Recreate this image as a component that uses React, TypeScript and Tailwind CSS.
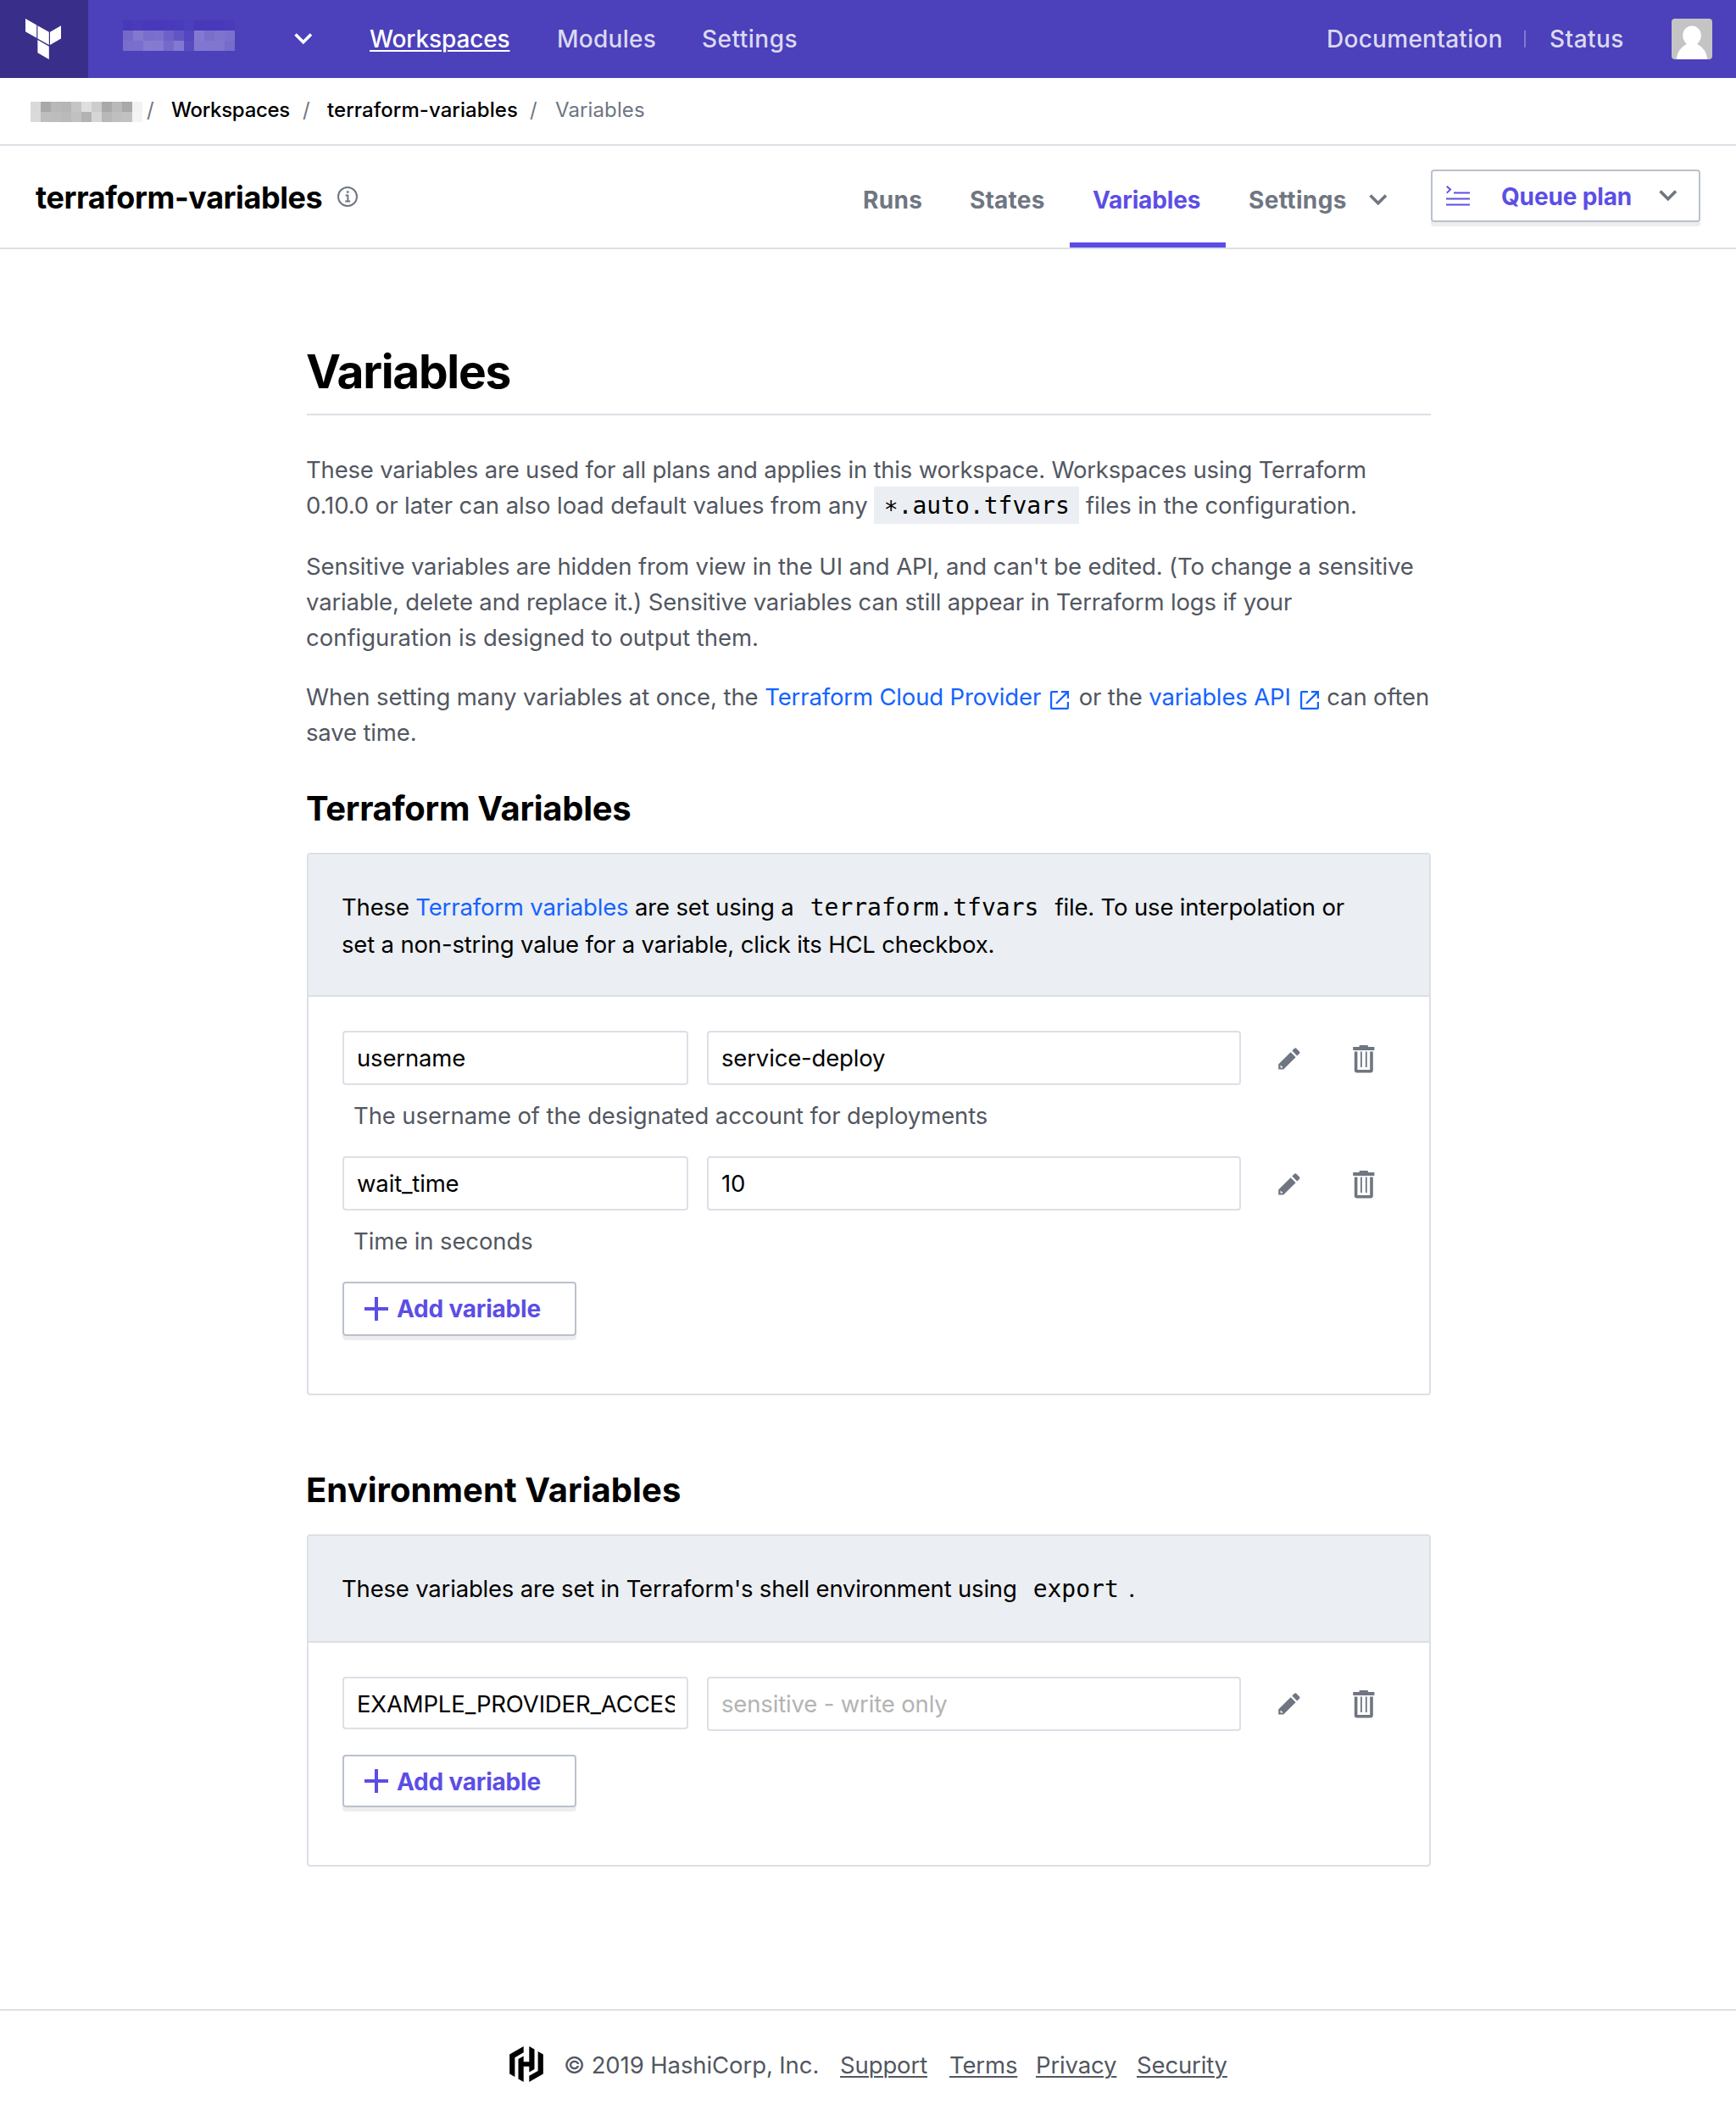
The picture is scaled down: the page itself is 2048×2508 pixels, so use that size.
import type { ReactNode } from "react";
import { SiHashicorp } from "react-icons/si";

function TerraformLogo() {
  return (
    <svg width="44" height="50" viewBox="29 21 44 50" fill="#fff">
      <path d="M30 22l13.2 7.5v15.3L30 37.2z" />
      <path d="M44.4 30.2l13.4 7.6v15.3l-13.4-7.6z" />
      <path d="M59 37.8l13-7.5v15.1L59 53z" />
      <path d="M44.4 47l13.4 7.7v15.2l-13.4-7.6z" />
    </svg>
  );
}

function Chevron({ className = "" }: { className?: string }) {
  return (
    <svg className={className} width="22" height="14" viewBox="0 0 22 14" fill="none" stroke="currentColor" strokeWidth="3.6">
      <path d="M1.6 1.6l9.2 9.2L20 1.6" />
    </svg>
  );
}

function InfoIcon() {
  return (
    <svg width="24" height="24" viewBox="0 0 24 24" fill="none" stroke="#6f7682" strokeWidth="2">
      <circle cx="12" cy="12" r="11" />
      <path d="M9.6 10.4h2.8v7M9.2 17.6h6" />
      <path d="M11 5.2h2.4v2.6H11z" fill="#6f7682" stroke="none" />
    </svg>
  );
}

function QueueIcon() {
  return (
    <svg width="28" height="25" viewBox="0 0 28 25" fill="none" stroke="#5c4ee5" strokeWidth="2">
      <path d="M.8.8l4.2 3.8L.8 8.6" />
      <path d="M9 8.4h19M0 15.4h28M0 22.4h28" />
    </svg>
  );
}

function ExternalIcon() {
  return (
    <svg className="relative top-[5px] inline-block align-baseline" width="22" height="22" viewBox="0 0 22 22" fill="none" stroke="#1563ff" strokeWidth="2.2">
      <path d="M9 1.1H2a.9.9 0 0 0-.9.9v18a.9.9 0 0 0 .9.9h18a.9.9 0 0 0 .9-.9v-7" />
      <path d="M13 1.1h7.900V9M20.6 1.4L7 15" />
    </svg>
  );
}

function PencilIcon() {
  return (
    <svg width="26" height="26" viewBox="0 0 26 26" fill="#6f7682">
      <path d="M16.3 3.6l2.8-2.8a1.6 1.6 0 0 1 2.2 0l3.7 3.7a1.6 1.6 0 0 1 0 2.2l-2.8 2.8z" />
      <path fillRule="evenodd" d="M14.6 5.2l6 6L6.2 25.6H.2v-6zM2.6 20.6v2.8h3.2z" />
    </svg>
  );
}

function TrashIcon() {
  return (
    <svg className="mt-[2px]" width="26" height="33" viewBox="0 0 26 33" fill="#6f7682">
      <path d="M7.5 1.2A1.2 1.2 0 0 1 8.7 0h8.1A1.2 1.2 0 0 1 18 1.2V2h7.4v4H.2V2h7.3z" />
      <path fillRule="evenodd" d="M1.8 7.6h22v22a3 3 0 0 1-3 3h-16a3 3 0 0 1-3-3zM5.4 7.6h14.8v21.4H5.4z" />
      <path d="M9 7.6h1.8V26H9zM14.9 7.6h1.8V26h-1.8z" />
    </svg>
  );
}

function PlusIcon() {
  return (
    <svg width="28" height="28" viewBox="0 0 28 28" stroke="#5c4ee5" strokeWidth="4">
      <path d="M14 0v28M0 14h28" />
    </svg>
  );
}

function Avatar() {
  return (
    <svg className="rounded-[4px]" width="48" height="48" viewBox="0 0 48 48">
      <path fill="#c4c4c4" d="M0 0h48v48H0z" />
      <ellipse cx="24" cy="20" rx="10.8" ry="11.5" fill="#fff" />
      <path fill="#fff" d="M18.500 26h11c0 4 1 4 4.500 6.500 5 4 7.500 8.500 8.200 15.500H5.800c.7-7 3.200-11.500 8.200-15.500 3.500-2.500 4.500-2.500 4.500-6.500z" />
    </svg>
  );
}

const orgTop = ["#7568ca", "#8378d0", "#7a6ecc", "#7b70cd", "#6d61c8", "#6155c3", "#5446be", "#8479d1", "#7a6ecc", "#7f73ce", "#7c70cd"];
const orgBottom = ["#7a6ecc", "#7a6fcc", "#867bd1", "#857ad1", "#7569ca", "#8479d1", "#594cc0", "#8277d0", "#8075cf", "#8075cf", "#776bcb"];
const orgAbove = ["#4739b9", "#493bb9", "#4739b9", "#4739b9", "#483aba", "#493bba", "#4b3fbb", "#4739b9", "#4739b9", "#4739b9", "#493bb9"];
const crumbTop = ["#d9d9d9", "#a8a8a8", "#b8b8b8", "#b6b6b6", "#c5c5c5", "#dfdfdf", "#cccccc", "#a9a9a9", "#b9b9b9", "#a9a9a9", "#f2f2f2"];
const crumbBottom = ["#dadada", "#bebebe", "#bdbdbd", "#bababa", "#c1c1c1", "#b3b3b3", "#d6d6d6", "#b8b8b8", "#bfbfbf", "#c1c1c1", "#f4f4f4"];

function Mosaic({ rows }: { rows: string[][] }) {
  return (
    <div>
      {rows.map((row, r) => (
        <div key={r} className="flex">
          {row.map((color, i) => (
            <div key={i} className="h-3 w-3" style={{ backgroundColor: color }} />
          ))}
        </div>
      ))}
    </div>
  );
}

function Code({ children, shaded = false }: { children: ReactNode; shaded?: boolean }) {
  return (
    <code
      className={
        "px-[11.5px] pt-[6px] pb-[5px] font-['DejaVu_Sans_Mono',monospace] text-[28px] leading-none tracking-normal text-black " +
        (shaded ? "bg-[#ebeef2]" : "")
      }
    >
      {children}
    </code>
  );
}

function Field({ value, muted = false, className }: { value: string; muted?: boolean; className: string }) {
  return (
    <input
      readOnly
      value={muted ? "" : value}
      placeholder={muted ? value : undefined}
      className={"block rounded-[4px] border-2 border-[#dce0e6] bg-white pr-[14px] pl-[15px] tracking-[-0.16px] text-black placeholder:text-[#b3b3b3] " + className}
    />
  );
}

function VariableRow({ name, value, note, muted = false, nameHeight = "h-16" }: { name: string; value: string; note?: string; muted?: boolean; nameHeight?: string }) {
  return (
    <div>
      <div className="flex items-start">
        <Field value={name} className={"w-[408px] " + nameHeight} />
        <Field value={value} muted={muted} className="ml-[22px] h-16 w-[630px]" />
        <div className={"ml-[44px] flex items-center " + (note ? "h-16" : "h-[62px]")}>
          <div className="w-[88px] pt-[2px]">
            <PencilIcon />
          </div>
          <TrashIcon />
        </div>
      </div>
      {note && <p className="mt-[15px] mb-[27px] pl-[13px] leading-[42px] tracking-[-0.11px]">{note}</p>}
    </div>
  );
}

function AddButton({ className, labelClass = "" }: { className: string; labelClass?: string }) {
  return (
    <button className={"flex w-[276px] items-center rounded-[4px] border-2 border-[#bac1cc] pl-[24px] shadow-[0_5px_1px_#ededf0] " + className}>
      <PlusIcon />
      <span className={"ml-[10px] text-[28px] font-bold tracking-[-0.2px] text-[#5c4ee5] " + labelClass}>Add variable</span>
    </button>
  );
}

export default function App() {
  return (
    <div className="flex h-[2508px] w-[2048px] flex-col bg-white font-[Inter,sans-serif] text-[27.5px] text-[#525761]">
      <header className="flex h-[92px] items-center bg-[#4c40bb] text-[28px] font-medium text-[#dbd9f1]">
        <div className="flex h-full w-[104px] items-center bg-[#392f8a] pl-[29px]">
          <TerraformLogo />
        </div>
        <div className="flex w-[332px] items-center pl-[41px]">
          <div className="-mt-2 w-[202px]">
            <Mosaic rows={[orgAbove, orgTop, orgBottom]} />
          </div>
          <Chevron className="text-white" />
        </div>
        <a className="w-[221px] tracking-[-0.13px] text-white underline decoration-2 underline-offset-[3px]">Workspaces</a>
        <a className="w-[171px] tracking-[0.26px]">Modules</a>
        <a className="tracking-[0.5px]">Settings</a>
        <a className="ml-auto w-[233px] tracking-[0.28px]">Documentation</a>
        <div className="h-5 w-[2px] bg-[#8279d1]" />
        <a className="ml-[28px] w-[144px] tracking-[0.45px]">Status</a>
        <div className="mr-[28px]">
          <Avatar />
        </div>
      </header>

      <nav className="flex h-[80px] items-center border-b-2 border-[#dce0e6] pb-[2px] pl-9 text-[24px] text-[#6f7682]">
        <div className="w-[137px] pt-[3px]">
          <Mosaic rows={[crumbTop, crumbBottom]} />
        </div>
        <span className="w-[29px]">/</span>
        <a className="w-[155px] font-medium tracking-[-0.3px] text-black">Workspaces</a>
        <span className="w-[29px]">/</span>
        <a className="w-[239px] font-medium tracking-[0.06px] text-black">terraform-variables</a>
        <span className="w-[30px]">/</span>
        <span className="tracking-[0.12px]">Variables</span>
      </nav>

      <div className="flex h-[122px] items-center border-b-2 border-[#dce0e6] pl-[42px] text-[28px] font-bold text-[#6f7682]">
        <h2 className="w-[356px] pt-[2px] text-[36px] tracking-[-0.42px] text-black">terraform-variables</h2>
        <InfoIcon />
        <div className="ml-auto flex h-full items-center">
          <a className="w-[126px] pt-[8px] tracking-[0.3px]">Runs</a>
          <a className="w-[118px] pt-[8px] tracking-[0.2px]">States</a>
          <a className="flex h-full w-[184px] items-center border-b-[6px] border-[#5c4ee5] pt-[14px] pl-[27px] tracking-[-0.15px] text-[#5c4ee5]">Variables</a>
          <a className="ml-[27px] w-[142px] pt-[8px] tracking-[0.35px]">Settings</a>
          <Chevron className="mt-[7px]" />
        </div>
        <button className="mr-[42px] mb-[2px] ml-[51px] flex h-[62px] w-[318px] items-center rounded-[4px] border-2 border-[#bac1cc] pl-[16px] text-left shadow-[0_5px_1px_#ededf0]">
          <QueueIcon />
          <span className="ml-[37px] w-[186px] pt-px tracking-[-0.15px] text-[#5c4ee5]">Queue plan</span>
          <Chevron />
        </button>
      </div>

      <main className="ml-[362px] flex h-[2076px] w-[1326px] flex-col">
        <h1 className="mt-[104px] h-[92px] border-b-2 border-[#dce0e6] -indent-px text-[55px] leading-[80px] font-bold tracking-[-1.28px] text-black">Variables</h1>

        <div className="mt-[43px] -ml-px leading-[42px] tracking-[-0.15px] whitespace-nowrap">
          <p className="mb-[30px]">
            <span className="tracking-[-0.19px]">These variables are used for all plans and applies in this workspace. Workspaces using Terraform</span>
            <br />
            <span className="tracking-[-0.08px]">
              0.10.0 or later can also load default values from any{" "}
              <Code shaded>
                <span className="relative top-[5px]">*</span>.auto.tfvars
              </Code>{" "}
              files in the configuration.
            </span>
          </p>
          <p className="mb-7">
            Sensitive variables are hidden from view in the UI and API, and can't be edited. (To change a sensitive
            <br />
            variable, delete and replace it.) Sensitive variables can still appear in Terraform logs if your
            <br />
            <span className="tracking-[-0.02px]">configuration is designed to output them.</span>
          </p>
          <p>
            <span className="tracking-[-0.07px]">When setting many variables at once, the </span>
            <a className="text-[#1563ff]">Terraform Cloud Provider</a>
            <span className="pr-1 pl-[11px]">
              <ExternalIcon />
            </span>{" "}
            or the <a className="text-[#1563ff]">variables API</a>
            <span className="pr-[2px] pl-[11px]">
              <ExternalIcon />
            </span>{" "}
            can often
            <br />
            save time.
          </p>
        </div>

        <h3 className="mt-[44px] -indent-px text-[40px] leading-[50px] font-bold tracking-[-0.28px] text-black">Terraform Variables</h3>
        <section className="mt-[27px] h-[640px] rounded-[4px] border-2 border-[#dce0e6] tracking-[-0.17px]">
          <div className="h-[168px] border-b-2 border-[#dce0e6] bg-[#ebeef2] pt-10 pl-[39px] leading-[44px] whitespace-nowrap text-black">
            These <a className="text-[#1563ff]">Terraform variables</a> are set using a <Code>terraform.tfvars</Code> file. To use interpolation or
            <br />
            set a non-string value for a variable, click its HCL checkbox.
          </div>
          <div className="pt-10 pl-10">
            <VariableRow name="username" value="service-deploy" note="The username of the designated account for deployments" />
            <VariableRow name="wait_time" value="10" note="Time in seconds" />
            <AddButton className="h-16" />
          </div>
        </section>

        <h3 className="mt-[87px] -indent-px text-[40px] leading-[50px] font-bold tracking-[0.06px] text-black">Environment Variables</h3>
        <section className="mt-[27px] h-[392px] rounded-[4px] border-2 border-[#dce0e6] tracking-[-0.19px]">
          <div className="h-[126px] border-b-2 border-[#dce0e6] bg-[#ebeef2] pt-10 pl-[39px] leading-[44px] whitespace-nowrap text-black">
            These variables are set in Terraform's shell environment using <Code>export</Code>.
          </div>
          <div className="pt-10 pl-10">
            <VariableRow name="EXAMPLE_PROVIDER_ACCESS_KEY" value="sensitive - write only" muted nameHeight="h-[62px] pt-[2px]" />
            <AddButton className="mt-[28px] h-[62px]" labelClass="pt-[2px]" />
          </div>
        </section>
      </main>

      <footer className="flex h-[138px] items-center border-t-2 border-[#dce0e6] pb-[6px] pl-[600px]">
        <SiHashicorp className="-mt-[5px] text-black" size={42} />
        <span className="ml-[23px] w-[326px] tracking-[-0.1px]">© 2019 HashiCorp, Inc.</span>
        <a className="w-[129px] tracking-[-0.12px] underline decoration-2 underline-offset-[3px]">Support</a>
        <a className="w-[102px] tracking-[-0.15px] underline decoration-2 underline-offset-[3px]">Terms</a>
        <a className="w-[119px] tracking-[-0.15px] underline decoration-2 underline-offset-[3px]">Privacy</a>
        <a className="tracking-[-0.15px] underline decoration-2 underline-offset-[3px]">Security</a>
      </footer>
    </div>
  );
}
